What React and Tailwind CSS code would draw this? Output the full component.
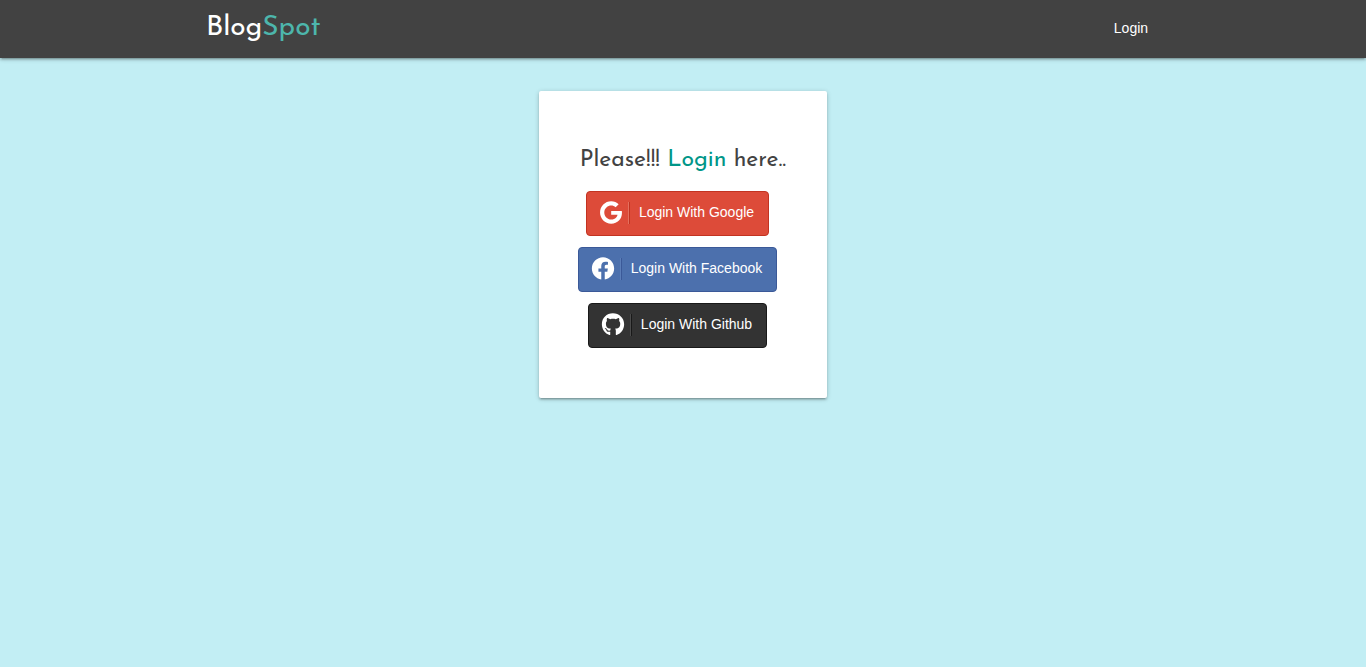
import { FaGoogle, FaFacebook, FaGithub } from "react-icons/fa";

const providers = [
  {
    name: "Google",
    Icon: FaGoogle,
    box: "border-[#c23321] bg-[#dd4b39]",
    line: "border-l-[#e4705f] border-r-[#c23321]",
  },
  {
    name: "Facebook",
    Icon: FaFacebook,
    box: "border-[#3b5998] bg-[#4c70ad]",
    line: "border-l-[#5b7db8] border-r-[#3b5998]",
  },
  {
    name: "Github",
    Icon: FaGithub,
    box: "border-[#191919] bg-[#333333]",
    line: "border-l-[#4a4a4a] border-r-[#191919]",
  },
];

const shadow =
  "shadow-[0_2px_2px_0_rgba(0,0,0,0.14),0_3px_1px_-2px_rgba(0,0,0,0.12),0_1px_5px_0_rgba(0,0,0,0.2)]";

function ProviderButton({ name, Icon, box, line }) {
  return (
    <button
      type="button"
      className={`flex h-[45px] items-start rounded border pt-[9px] pr-[14px] pl-3 text-sm text-white ${box}`}
    >
      <Icon className="h-[23px] w-6" aria-hidden="true" />
      <span className={`mt-px ml-[5px] h-[22px] w-[2px] border-r border-l ${line}`} />
      <span className="ml-[9px] leading-[22px]">Login With {name}</span>
    </button>
  );
}

export default function App() {
  return (
    <div className="min-h-screen bg-[#c2eef4] font-['Liberation_Sans',Arial,sans-serif]">
      <header className={`bg-[#424242] ${shadow}`}>
        <nav className="mx-auto flex h-[58px] w-[70%] justify-between">
          <a
            href="#"
            className="pt-1 pl-px font-['Josefin_Sans',Lato,sans-serif] text-[28px] leading-[48px] text-white"
          >
            Blog<span className="text-[#4db6ac]">Spot</span>
          </a>
          <a href="#login" className="px-[13px] text-sm leading-[56px] text-white">
            Login
          </a>
        </nav>
      </header>
      <main className="flex justify-center pt-[33px]">
        <section
          className={`flex w-72 flex-col items-center rounded-[2px] bg-white pt-[54px] pb-[50px] ${shadow}`}
        >
          <h1 className="font-['Josefin_Sans',Lato,sans-serif] text-[23px] leading-8 text-[#424242]">
            Please!!! <span className="text-[#009688]">Login</span> here..
          </h1>
          <div className="mt-[14px] mr-[11px] flex flex-col items-center gap-[11px]">
            {providers.map((p) => (
              <ProviderButton key={p.name} {...p} />
            ))}
          </div>
        </section>
      </main>
    </div>
  );
}
